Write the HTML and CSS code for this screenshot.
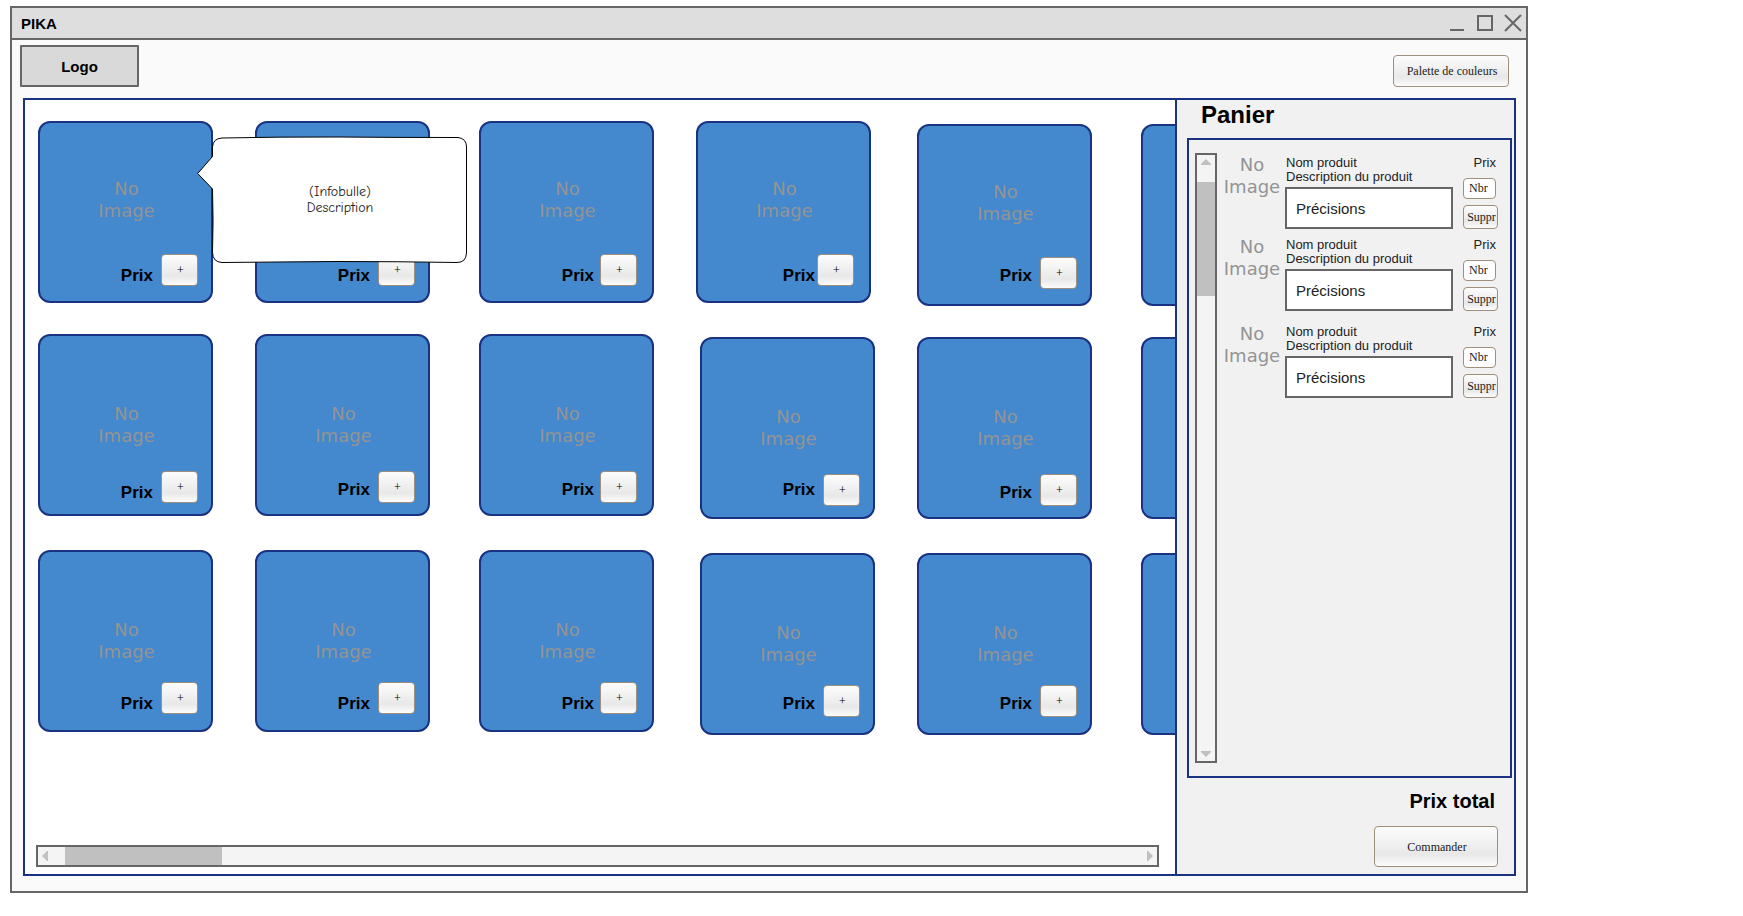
FILE: index.html
```html
<!DOCTYPE html>
<html lang="fr">
<head>
<meta charset="utf-8">
<title>PIKA</title>
<link rel="stylesheet" href="styles.css">
</head>
<body>
<div class="window">
  <header class="titlebar">
    <h1 class="titlebar__name">PIKA</h1>
    <div class="titlebar__controls">
      <button class="wincontrol" type="button" aria-label="Réduire"><svg width="18" height="18" viewBox="0 0 18 18"><path d="M2 16H16"/></svg></button>
      <button class="wincontrol" type="button" aria-label="Agrandir"><svg width="18" height="18" viewBox="0 0 18 18"><path d="M2 2H16V16H2Z"/></svg></button>
      <button class="wincontrol" type="button" aria-label="Fermer"><svg width="18" height="18" viewBox="0 0 18 18"><path d="M1 1L17 17M17 1L1 17"/></svg></button>
    </div>
  </header>

  <div class="toolbar">
    <div class="logo">Logo</div>
    <button class="btn btn--palette" type="button">Palette de couleurs</button>
  </div>

  <div class="shop">
    <main class="catalog">
      <div class="row row--first">
        <article class="card">
          <p class="noimage">No<br>Image</p>
          <div class="card__foot"><span class="price price--low">Prix</span><button class="btn btn--add" type="button">+</button></div>
          <div class="tooltip" role="tooltip">
            <svg class="tooltip__shape" width="270" height="128" viewBox="0 0 270 128"><path d="M24 2Q80 .8 140 1Q200 1.5 260 1.5Q268.500 2.500 268.500 11L268.500 117Q268 126.500 259 126.500Q200 125.500 140 125.500Q80 126 24 126.500Q14.500 126 14.500 116Q15.600 85 14.500 53L-.3 37.500L14.500 20.500V11Q15 2.500 24 2Z"/></svg>
            <p class="tooltip__text">(Infobulle)<br>Description</p>
          </div>
        </article>
        <article class="card">
          <div class="card__blank"></div>
          <div class="card__foot"><span class="price price--low">Prix</span><button class="btn btn--add" type="button">+</button></div>
        </article>
        <article class="card">
          <p class="noimage">No<br>Image</p>
          <div class="card__foot card__foot--inset"><span class="price price--low">Prix</span><button class="btn btn--add" type="button">+</button></div>
        </article>
        <article class="card">
          <p class="noimage">No<br>Image</p>
          <div class="card__foot card__foot--tight"><span class="price price--low">Prix</span><button class="btn btn--add" type="button">+</button></div>
        </article>
        <article class="card card--low">
          <p class="noimage">No<br>Image</p>
          <div class="card__foot"><span class="price price--mid">Prix</span><button class="btn btn--add" type="button">+</button></div>
        </article>
        <article class="card card--low"></article>
      </div>

      <div class="row row--second">
        <article class="card">
          <p class="noimage">No<br>Image</p>
          <div class="card__foot"><span class="price price--low">Prix</span><button class="btn btn--add" type="button">+</button></div>
        </article>
        <article class="card">
          <p class="noimage">No<br>Image</p>
          <div class="card__foot"><span class="price price--mid">Prix</span><button class="btn btn--add" type="button">+</button></div>
        </article>
        <article class="card">
          <p class="noimage">No<br>Image</p>
          <div class="card__foot card__foot--inset"><span class="price price--mid">Prix</span><button class="btn btn--add" type="button">+</button></div>
        </article>
        <article class="card card--low">
          <p class="noimage">No<br>Image</p>
          <div class="card__foot"><span class="price">Prix</span><button class="btn btn--add" type="button">+</button></div>
        </article>
        <article class="card card--low">
          <p class="noimage">No<br>Image</p>
          <div class="card__foot"><span class="price price--mid">Prix</span><button class="btn btn--add" type="button">+</button></div>
        </article>
        <article class="card card--low"></article>
      </div>

      <div class="row row--third">
        <article class="card">
          <p class="noimage">No<br>Image</p>
          <div class="card__foot"><span class="price price--low">Prix</span><button class="btn btn--add" type="button">+</button></div>
        </article>
        <article class="card">
          <p class="noimage">No<br>Image</p>
          <div class="card__foot"><span class="price price--low">Prix</span><button class="btn btn--add" type="button">+</button></div>
        </article>
        <article class="card">
          <p class="noimage">No<br>Image</p>
          <div class="card__foot card__foot--inset"><span class="price price--low">Prix</span><button class="btn btn--add" type="button">+</button></div>
        </article>
        <article class="card card--low">
          <p class="noimage">No<br>Image</p>
          <div class="card__foot"><span class="price price--mid">Prix</span><button class="btn btn--add" type="button">+</button></div>
        </article>
        <article class="card card--low">
          <p class="noimage">No<br>Image</p>
          <div class="card__foot"><span class="price price--mid">Prix</span><button class="btn btn--add" type="button">+</button></div>
        </article>
        <article class="card card--low"></article>
      </div>

      <div class="scroll scroll--x">
        <button class="scroll__arrow" type="button" aria-label="Défiler à gauche"><svg width="6" height="10" viewBox="0 0 6 10"><path d="M0 5L5 0H6V10H5Z"/></svg></button>
        <div class="scroll__thumb"></div>
        <button class="scroll__arrow scroll__arrow--end" type="button" aria-label="Défiler à droite"><svg width="6" height="10" viewBox="0 0 6 10"><path d="M6 5L1 0H0V10H1Z"/></svg></button>
      </div>
    </main>

    <aside class="cart">
      <h2 class="cart__title">Panier</h2>
      <div class="cart__list">
        <div class="scroll scroll--y">
          <button class="scroll__arrow" type="button" aria-label="Défiler vers le haut"><svg width="10" height="6" viewBox="0 0 10 6"><path d="M5 0L10 5V6H0V5Z"/></svg></button>
          <div class="scroll__thumb"></div>
          <button class="scroll__arrow scroll__arrow--end" type="button" aria-label="Défiler vers le bas"><svg width="10" height="6" viewBox="0 0 10 6"><path d="M5 6L10 1V0H0V1Z"/></svg></button>
        </div>
        <ul class="items">
          <li class="item">
            <p class="noimage">No<br>Image</p>
            <div class="item__info">
              <p>Nom produit</p>
              <p>Description du produit</p>
              <input class="note" type="text" value="Précisions" aria-label="Précisions">
            </div>
            <div class="item__side">
              <span class="item__price">Prix</span>
              <input class="qty" type="text" value="Nbr" aria-label="Nombre">
              <button class="btn btn--remove" type="button">Suppr</button>
            </div>
          </li>
          <li class="item">
            <p class="noimage">No<br>Image</p>
            <div class="item__info">
              <p>Nom produit</p>
              <p>Description du produit</p>
              <input class="note" type="text" value="Précisions" aria-label="Précisions">
            </div>
            <div class="item__side">
              <span class="item__price">Prix</span>
              <input class="qty" type="text" value="Nbr" aria-label="Nombre">
              <button class="btn btn--remove" type="button">Suppr</button>
            </div>
          </li>
          <li class="item">
            <p class="noimage">No<br>Image</p>
            <div class="item__info">
              <p>Nom produit</p>
              <p>Description du produit</p>
              <input class="note" type="text" value="Précisions" aria-label="Précisions">
            </div>
            <div class="item__side">
              <span class="item__price">Prix</span>
              <input class="qty" type="text" value="Nbr" aria-label="Nombre">
              <button class="btn btn--remove" type="button">Suppr</button>
            </div>
          </li>
        </ul>
      </div>
      <p class="cart__total">Prix total</p>
      <button class="btn btn--order" type="button">Commander</button>
    </aside>
  </div>
</div>
</body>
</html>
```

FILE: styles.css
```css
:root {
  --grey: #666;
  --navy: #1a3282;
  --blue: #4488cd;
}

* {
  box-sizing: border-box;
}

body {
  margin: 0;
  min-height: 100vh;
  padding: 6px 215px 23px 10px;
  display: flex;
  background: #fff;
  color: #000;
  font-family: "Liberation Sans", Arial, sans-serif;
}

h1,
h2,
p,
ul {
  margin: 0;
  padding: 0;
}

svg {
  display: block;
}

.window {
  flex: 1;
  min-width: 0;
  display: flex;
  flex-direction: column;
  border: 2px solid var(--grey);
  background: #fafafa;
}

/* Title bar */
.titlebar {
  display: flex;
  align-items: center;
  justify-content: space-between;
  height: 32px;
  padding: 0 4px 0 9px;
  border-bottom: 2px solid var(--grey);
  background: #dedede;
}

.titlebar__name {
  padding-top: 1px;
  font-size: 15px;
  line-height: 18px;
}

.titlebar__controls {
  display: flex;
  gap: 10px;
}

.wincontrol {
  padding: 0;
  border: 0;
  background: none;
}

.wincontrol path {
  fill: none;
  stroke: var(--grey);
  stroke-width: 2;
}

/* Toolbar */
.toolbar {
  display: flex;
  align-items: flex-end;
  justify-content: space-between;
  padding: 5px 17px 11px 8px;
}

.logo {
  width: 119px;
  padding-top: 2px;
  border: 2px solid var(--grey);
  border-radius: 1px;
  background: #d9d9d9;
  font-size: 15px;
  font-weight: bold;
  line-height: 36px;
  text-align: center;
}

.btn {
  padding: 0 0 0 2px;
  border: 1px solid #9f907e;
  border-radius: 4px;
  background: linear-gradient(#fcfcfc, #f4f4f4 30%, #e8e8e8 70%, #fcfcfc);
  color: #222;
  font-family: "Liberation Serif", "Times New Roman", serif;
  font-size: 12px;
  line-height: 14px;
  text-align: center;
  white-space: nowrap;
}

.btn--palette {
  width: 116px;
  height: 32px;
}

/* Shop frame */
.shop {
  flex: 1;
  display: flex;
  margin: 0 10px 15px 11px;
  border: 2px solid var(--navy);
  background: #fff;
}

.catalog {
  flex: 1;
  min-width: 0;
  overflow: hidden;
  display: flex;
  flex-direction: column;
  padding: 21px 16px 7px 11px;
}

.row {
  display: grid;
  align-items: start;
  margin-right: -16px;
  padding-left: 2px;
}

.row--first {
  grid-template-columns: 217px 224px 217px 221px 224px 175px;
  margin-bottom: 28px;
  --image-top: 55px;
  --foot-gap: 32px;
}

.row--second,
.row--third {
  grid-template-columns: 217px 224px 221px 217px 224px 175px;
  --image-top: 67px;
}

.row--second {
  margin-bottom: 31px;
  --foot-gap: 24px;
}

.row--third {
  --foot-gap: 19px;
}

.card {
  position: relative;
  width: 175px;
  min-height: 182px;
  padding-top: var(--image-top);
  border: 2px solid var(--navy);
  border-radius: 12px;
  background: var(--blue);
}

.card--low {
  margin-top: 3px;
}

.card__blank {
  height: 44px;
}

.noimage {
  padding-left: 2px;
  color: #949494;
  font-family: "DejaVu Sans", Verdana, sans-serif;
  font-size: 18px;
  line-height: 22px;
  text-align: center;
}

.card__foot {
  display: flex;
  justify-content: flex-end;
  align-items: center;
  gap: 8px;
  margin-top: var(--foot-gap);
  padding-right: 13px;
}

.card__foot--inset {
  gap: 6px;
  padding-right: 15px;
}

.card__foot--tight {
  gap: 2px;
  padding-right: 15px;
}

.price {
  font-size: 17px;
  font-weight: bold;
  line-height: 20px;
}

.price--mid {
  padding-top: 6px;
}

.price--low {
  align-self: flex-end;
}

.btn--add {
  width: 37px;
  height: 32px;
  color: #000;
}

/* Speech bubble over the neighbouring card */
.tooltip {
  position: absolute;
  top: 13px;
  left: 158px;
  z-index: 2;
  display: grid;
  align-items: center;
}

.tooltip__shape,
.tooltip__text {
  grid-area: 1 / 1;
}

.tooltip__shape {
  overflow: visible;
}

.tooltip__shape path {
  fill: #fff;
  stroke: #000;
  stroke-width: 1;
}

.tooltip__text {
  padding-left: 14px;
  color: #222;
  font-family: "Comic Sans MS", "Comic Neue", "Noto Sans", sans-serif;
  font-size: 14px;
  line-height: 16px;
  text-align: center;
}

/* Scroll bars */
.scroll {
  display: flex;
  border: 2px solid var(--grey);
  background: #f4f4f4;
}

.scroll--x {
  height: 22px;
  margin-top: auto;
}

.scroll--y {
  flex-direction: column;
  width: 22px;
}

.scroll__arrow {
  display: flex;
  align-items: center;
  justify-content: center;
  padding: 0;
  border: 0;
  background: none;
}

.scroll__arrow path {
  fill: #c0c0c0;
}

.scroll__thumb {
  background: #c0c0c0;
}

.scroll--x .scroll__arrow {
  width: 27px;
  padding-right: 13px;
}

.scroll--x .scroll__thumb {
  width: 14%;
}

.scroll--x .scroll__arrow--end {
  margin-left: auto;
  padding: 0 0 0 13px;
}

.scroll--y .scroll__arrow {
  height: 27px;
  padding-bottom: 13px;
}

.scroll--y .scroll__thumb {
  height: 114px;
}

.scroll--y .scroll__arrow--end {
  margin-top: auto;
  padding: 13px 0 0;
}

/* Cart */
.cart {
  display: flex;
  flex-direction: column;
  width: 339px;
  padding: 1px 2px 7px 10px;
  border-left: 2px solid var(--navy);
  background: #f1f1f1;
}

.cart__title {
  padding-left: 14px;
  font-size: 24px;
  line-height: 28px;
}

.cart__list {
  flex: 1;
  display: flex;
  margin-top: 9px;
  padding: 13px 12px 13px 6px;
  border: 2px solid var(--navy);
}

.items {
  flex: 1;
  display: flex;
  flex-direction: column;
  gap: 7px;
  padding-top: 1px;
  list-style: none;
}

.item {
  display: grid;
  grid-template-columns: 68px 1fr 35px;
}

.item:last-child {
  margin-top: 5px;
}

.item__info,
.item__side {
  display: flex;
  flex-direction: column;
  padding-top: 2px;
  color: #222;
  font-size: 13px;
  line-height: 14px;
}

.item__info {
  padding-right: 10px;
}

.item__info p {
  padding-left: 1px;
}

.note {
  width: 100%;
  height: 42px;
  margin-top: 3px;
  padding: 0 9px;
  border: 2px solid var(--grey);
  background: #fff;
  color: #222;
  font-family: inherit;
  font-size: 15px;
}

.item__price {
  padding-right: 2px;
  text-align: right;
}

.qty {
  width: 33px;
  height: 21px;
  margin-top: 8px;
  padding: 0 5px;
  border: 1px solid #9f907e;
  border-radius: 4px;
  background: #fff;
  color: #222;
  font-family: "Liberation Serif", "Times New Roman", serif;
  font-size: 12px;
}

.btn--remove {
  width: 35px;
  height: 24px;
  margin-top: 6px;
}

.cart__total {
  margin-top: 11px;
  padding-right: 17px;
  font-size: 20px;
  font-weight: bold;
  line-height: 24px;
  text-align: right;
}

.btn--order {
  align-self: flex-end;
  width: 124px;
  height: 41px;
  margin: 13px 14px 0 0;
}
```
